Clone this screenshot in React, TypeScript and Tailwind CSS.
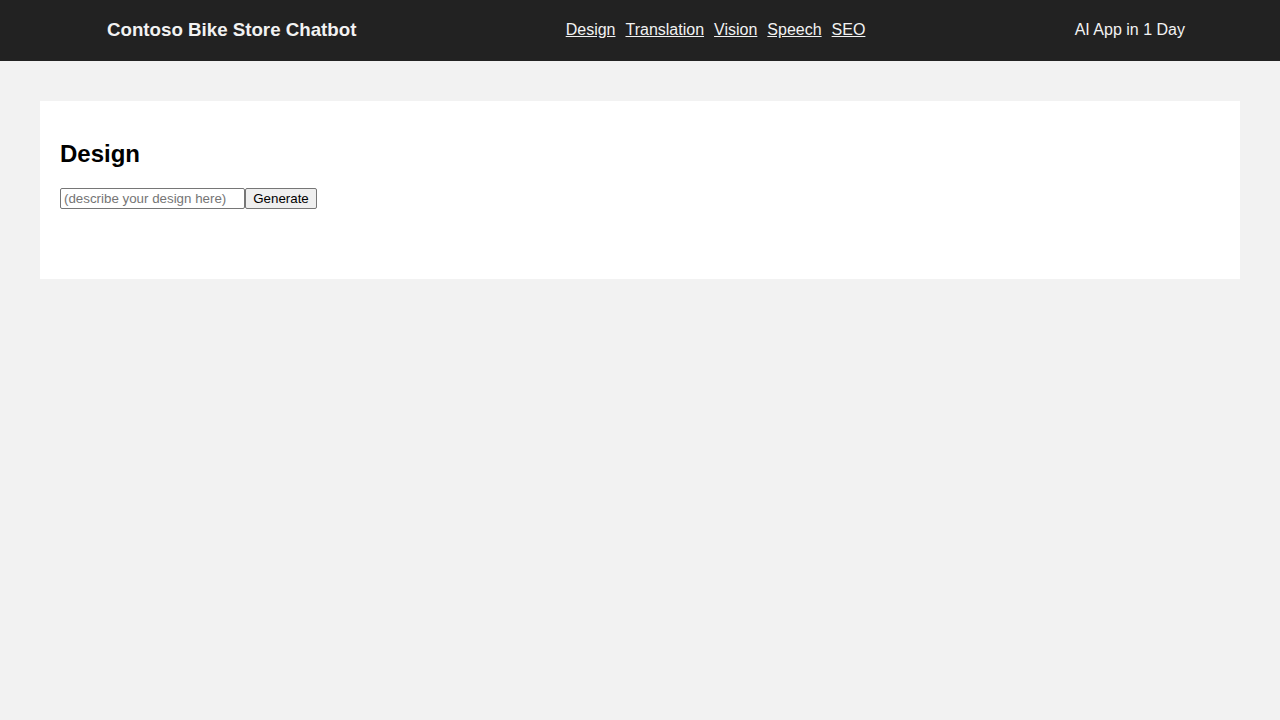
export default function App() {
  const links = ["Design", "Translation", "Vision", "Speech", "SEO"];

  return (
    <div className="min-h-screen bg-[#f2f2f2] font-['Liberation_Sans',Arial,sans-serif] text-black">
      <header className="flex h-[61px] items-center justify-between bg-[#222222] pr-[95px] pb-[2px] pl-[107px] text-[#f2f2f2]">
        <h1 className="mt-[2px] text-[18.72px] font-bold">Contoso Bike Store Chatbot</h1>
        <nav className="flex gap-[10px] text-base">
          {links.map((l) => (
            <a key={l} href="#" className="underline">
              {l}
            </a>
          ))}
        </nav>
        <div className="text-base">AI App in 1 Day</div>
      </header>

      <main className="p-10">
        <section className="bg-white p-5">
          <h2 className="mt-[19px] mb-5 text-2xl leading-7 font-bold">Design</h2>
          <div className="flex">
            <input
              type="text"
              placeholder="(describe your design here)"
              className="h-[21px] w-[185px] rounded-[2px] border border-[#767676] px-[3px] text-[13.33px] placeholder:text-[#757575]"
            />
            <button className="h-[21px] w-[72px] rounded-[2px] border border-[#767676] bg-[#efefef] text-[13.33px]">
              Generate
            </button>
          </div>
          <div className="h-[50px]" />
        </section>
      </main>
    </div>
  );
}
